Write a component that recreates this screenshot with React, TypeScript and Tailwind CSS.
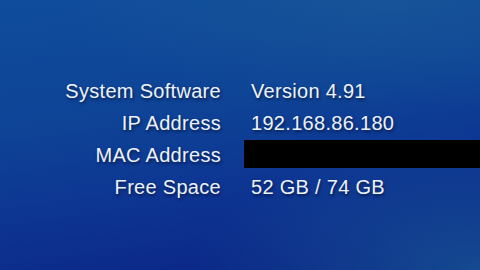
import React from 'react';

const rows: { label: string; value: string | null }[] = [
  { label: 'System Software', value: 'Version 4.91' },
  { label: 'IP Address', value: '192.168.86.180' },
  { label: 'MAC Address', value: null },
  { label: 'Free Space', value: '52 GB / 74 GB' },
];

const App: React.FC = () => {
  return (
    <div className="relative h-[270px] w-[480px] overflow-hidden bg-[linear-gradient(172deg,#0f4c9c_0%,#0e4396_40%,#0d3592_65%,#0b2284_100%)] font-['Liberation_Sans',Arial,sans-serif]">
      <div className="absolute inset-0 bg-[radial-gradient(ellipse_60%_50%_at_100%_100%,rgba(25,90,150,0.7),transparent)]" />
      <div className="absolute inset-0 bg-[radial-gradient(ellipse_70%_40%_at_80%_0%,rgba(30,95,150,0.5),transparent)]" />
      <div className="relative flex flex-col pt-[75px]">
        {rows.map((r) => (
          <div key={r.label} className="flex h-[32px] items-center">
            <div className="w-[221px] shrink-0 text-right text-[20px] leading-[32px] tracking-[0.3px] text-[#eef2f8] [text-shadow:1px_2px_3px_rgba(0,10,40,0.6)]">
              {r.label}
            </div>
            {r.value ? (
              <div className="pl-[30px] text-[20px] leading-[32px] tracking-[0.3px] text-[#eef2f8] [text-shadow:1px_2px_3px_rgba(0,10,40,0.6)]">
                {r.value}
              </div>
            ) : (
              <div className="ml-[23px] mt-[-2px] h-[28px] flex-1 bg-black" />
            )}
          </div>
        ))}
      </div>
    </div>
  );
};

export default App;
